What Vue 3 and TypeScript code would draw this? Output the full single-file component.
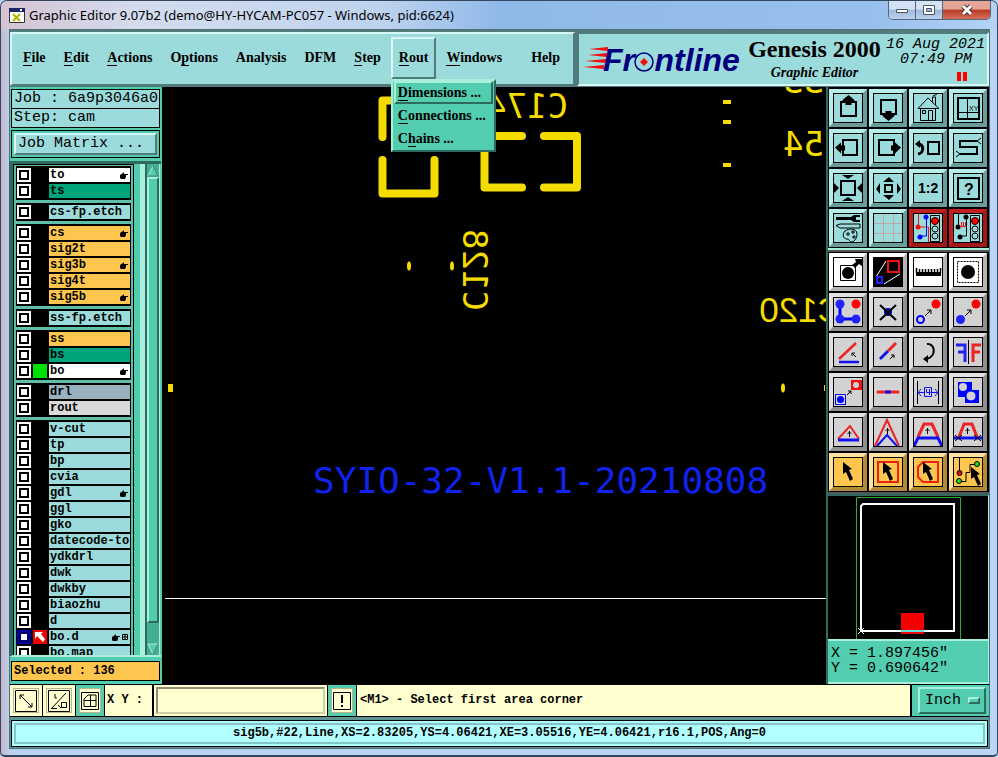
<script setup lang="ts">
import { ref } from 'vue'

interface MenuEntry { before: string; key: string; after: string; open?: boolean; last?: boolean }
interface Layer { name: string; tone?: string; hand?: boolean; mark?: 'green' | 'arrow'; grid?: boolean }
interface Tool { label: string; art: string; tone?: string }

const menus: MenuEntry[] = [
  { before: '', key: 'F', after: 'ile' },
  { before: '', key: 'E', after: 'dit' },
  { before: '', key: 'A', after: 'ctions' },
  { before: 'O', key: 'p', after: 'tions' },
  { before: 'Analysis', key: '', after: '' },
  { before: 'DFM', key: '', after: '' },
  { before: '', key: 'S', after: 'tep' },
  { before: '', key: 'R', after: 'out', open: true },
  { before: '', key: 'W', after: 'indows' },
  { before: 'Help', key: '', after: '', last: true },
]
const routItems: MenuEntry[] = [
  { before: '', key: 'D', after: 'imensions ...' },
  { before: '', key: 'C', after: 'onnections ...' },
  { before: 'C', key: 'h', after: 'ains ...' },
]

const layerGroups: Layer[][] = [
  [{ name: 'to', tone: 'white', hand: true }, { name: 'ts', tone: 'green' }],
  [{ name: 'cs-fp.etch' }],
  [
    { name: 'cs', tone: 'orange', hand: true },
    { name: 'sig2t', tone: 'orange' },
    { name: 'sig3b', tone: 'orange', hand: true },
    { name: 'sig4t', tone: 'orange' },
    { name: 'sig5b', tone: 'orange', hand: true },
  ],
  [{ name: 'ss-fp.etch' }],
  [
    { name: 'ss', tone: 'orange' },
    { name: 'bs', tone: 'green' },
    { name: 'bo', tone: 'white', hand: true, mark: 'green' },
  ],
  [{ name: 'drl', tone: 'slate' }, { name: 'rout', tone: 'gray' }],
  [
    { name: 'v-cut' }, { name: 'tp' }, { name: 'bp' }, { name: 'cvia' },
    { name: 'gdl', hand: true }, { name: 'ggl' }, { name: 'gko' },
    { name: 'datecode-to' }, { name: 'ydkdrl' }, { name: 'dwk' },
    { name: 'dwkby' }, { name: 'biaozhu' }, { name: 'd' },
    { name: 'bo.d', hand: true, grid: true, mark: 'arrow' }, { name: 'bo.map' },
  ],
]

const cursor = '<path d="M10 5l9 7-3 1 4 9-3 2-4-9-3 2z"/>'
const upArrow = (x: number, y: number) =>
  `<path d="M${x}.5 ${y + 6}v-6M${x - 2}.5 ${y + 3}l2-2 2 2" fill="none" stroke="#000"/>`
const slantArrow = (x: number, y: number) =>
  `<path d="M${x} ${y}l6-6m-4 0h4v4" fill="none" stroke="#000"/>`

const viewTools: Tool[] = [
  { label: 'Pan up', art: '<path d="M8 9h15v14h-15z" fill="none" stroke="#000" stroke-width="2"/><path d="M15.500 2l6 5v2h-3v3h-6v-3h-3v-2z"/>' },
  { label: 'Pan down', art: '<path d="M8 7h15v14h-15z" fill="none" stroke="#000" stroke-width="2"/><path d="M15.500 28l6-5v-2h-3v-3h-6v3h-3v2z"/>' },
  { label: 'Home', art: '<path d="M5 15.500l10-10.500 11 10.500H5M7.500 16v11.500h15v-11.500M19.500 9v-5h3v8M9.500 17.500h3v3h-3zM15.500 27v-9.500h4v9.500M20 3l4-2" fill="none" stroke="#000"/>' },
  { label: 'Axes window', art: '<path d="M5 5h21v21h-21z" fill="none" stroke="#000" stroke-width="2"/><path d="M14.500 5v21M5 19.500h21" fill="none" stroke="#000"/><text x="16" y="18" font-size="7">XY</text>' },
  { label: 'Pan left', art: '<path d="M10 7h14v15h-14z" fill="none" stroke="#000" stroke-width="2"/><path d="M2 14.500l6-5v3h4v5h-4v3z"/>' },
  { label: 'Pan right', art: '<path d="M6 7h15v15h-15z" fill="none" stroke="#000" stroke-width="2"/><path d="M28 14.500l-6-5v3h-4v5h4v3z"/>' },
  { label: 'Previous view', art: '<path d="M15 9h11v12h-11z" fill="none" stroke="#000" stroke-width="2"/><path d="M4 11c7-1 8 9 1 10" fill="none" stroke="#000" stroke-width="3"/><path d="M2 11l5-4v8z"/>' },
  { label: 'Serpentine', art: '<path d="M24 8h-17v6h17v7h-17" fill="none" stroke="#000" stroke-width="2"/><path d="M24 8l4-3m-4 3l4 3M7 21l-4-3m4 3l-4 3" fill="none" stroke="#000"/>' },
  { label: 'Zoom in', art: '<path d="M8 8h14v14h-14z" fill="none" stroke="#000" stroke-width="2"/><path d="M9 2h12l-6 4zM9 28h12l-6-4zM1 10l5 5-5 5zM29 10l-5 5 5 5z"/>' },
  { label: 'Zoom out', art: '<path d="M12 12h7v7h-7z" fill="none" stroke="#000" stroke-width="2"/><path d="M10 9h11l-5-5zM10 22h11l-5 5zM7 10v11l-4-5zM24 10v11l4-5z"/>' },
  { label: 'Actual size', art: '<text x="5" y="20" font-size="14" font-weight="700">1:2</text>' },
  { label: 'Query', art: '<path d="M5 5h21v21h-21z" fill="none" stroke="#000" stroke-width="2"/><text x="11" y="22" font-size="16" font-weight="700">?</text>' },
  { label: 'Setup', art: '<path d="M3 4h15l3-2h6v2h-4v3h4v2h-6l-3-2h-15z"/><path d="M3 12.500l4-1.500h20v4h-20zM12 18c4-3 12-3 12 3 0 5-3 8-6 8-2 0-1-3-4-3-4 0-5-5-2-8zM14 20h2v2h-2zM19 18h2v2h-2zM20 23h2v2h-2z" fill="none" stroke="#000"/>' },
  { label: 'Grid', art: '<path d="M10.500 1v28M20.500 1v28M1 10.500h28M1 20.500h28" stroke="#c4a5a5" fill="none"/>' },
  { label: 'Net check', tone: 'alert', art: '<path d="M5.500 1v13h10v15" fill="none" stroke="#e11"/><path d="M13.500 4v19h-7" fill="none" stroke="#00f"/><circle cx="13" cy="4" r="2.500" fill="#00f"/><circle cx="5" cy="14" r="2.500" fill="#e11"/><circle cx="7" cy="24" r="2.500" fill="#00f"/><path d="M17.500 2.500h9v26h-9z" fill="#9cdbdb" stroke="#000"/><circle cx="22" cy="8" r="3.500" fill="#f00" stroke="#000"/><circle cx="22" cy="16" r="3" fill="none" stroke="#000"/><circle cx="22" cy="23" r="3" fill="none" stroke="#000"/>' },
  { label: 'Spacing check', tone: 'alert', art: '<path d="M5.500 1v13M13.500 4v19h-7" fill="none" stroke="#000"/><circle cx="13" cy="4" r="2.500"/><circle cx="5" cy="14" r="2.500"/><circle cx="7" cy="24" r="2.500"/><path d="M7 13.500h6M8.500 9v4M10.500 9v4M12.500 9v4" stroke="#e11"/><path d="M17.500 2.500h9v26h-9z" fill="#9cdbdb" stroke="#000"/><circle cx="22" cy="8" r="3.500" fill="#f00" stroke="#000"/><circle cx="22" cy="16" r="3" fill="none" stroke="#000"/><circle cx="22" cy="23" r="3" fill="none" stroke="#000"/>' },
]

const editTools: Tool[] = [
  { label: 'Snap', tone: 'white', art: '<path d="M7.500 8.500h15v15h-15z" fill="none" stroke="#000"/><circle cx="15" cy="16" r="6"/><path d="M19 8l4-3-1-3h7v7l-3-2-4 4z"/>' },
  { label: 'Area select', tone: 'white', art: '<path d="M0 0h30v30H0z"/><path d="M13 4L3 20M27 17L11 27" stroke="#fff" fill="none"/><path d="M15 4h11v11h-11z" fill="none" stroke="#e11" stroke-width="2"/><path d="M4 20h5v6h-5z" fill="none" stroke="#22f" stroke-width="2"/>' },
  { label: 'Measure', tone: 'white', art: '<path d="M3 15h25v4H3z"/><path d="M3.500 11v5M6.500 12v4M9.500 12v4M12.500 12v4M15.500 12v4M18.500 12v4M21.500 12v4M24.500 12v4M27.500 11v5" stroke="#000" stroke-width="1.500"/>' },
  { label: 'Feature select', tone: 'white', art: '<path d="M4.500 4.500h21v21h-21z" fill="none" stroke="#000" stroke-dasharray="2 1"/><circle cx="15" cy="15" r="7"/>' },
  { label: 'Chain select', art: '<path d="M7 7v15h16" fill="none" stroke="#00f" stroke-width="3"/><g fill="#22f"><circle cx="7" cy="7" r="4.500"/><circle cx="7" cy="22" r="4.500"/><circle cx="23" cy="22" r="4.500"/></g><circle cx="23" cy="7" r="4.500" fill="#f00"/>' },
  { label: 'Delete', art: '<circle cx="15" cy="15" r="4" fill="#00b"/><path d="M7 8l16 15M23 8L7 23" stroke="#000" stroke-width="2"/>' },
  { label: 'Copy', art: '<circle cx="23" cy="7" r="4.500" fill="#f00"/><circle cx="7.500" cy="22.500" r="3.500" fill="none" stroke="#00f" stroke-width="2"/>' + slantArrow(12, 19) },
  { label: 'Move', art: '<circle cx="23" cy="7" r="4.500" fill="#f00"/><circle cx="7.500" cy="22.500" r="4.500" fill="#22f"/>' + slantArrow(12, 19) },
  { label: 'Rotate line', art: '<path d="M6 22L23 6" stroke="#e22" stroke-width="2.500"/><path d="M6 25h20" stroke="#11e" stroke-width="2.500"/><path d="M23 20l-4-4m0 3v-3h3" fill="none" stroke="#000"/>' },
  { label: 'Extend line', art: '<path d="M7 22l8-8" stroke="#11e" stroke-width="3"/><path d="M15 14l8-8" stroke="#e22" stroke-width="3"/><path d="M17 22l4-4m-3 0h3v3" fill="none" stroke="#000"/>' },
  { label: 'Rotate', art: '<path d="M14 7c8-1 10 12 0 15" fill="none" stroke="#000" stroke-width="2"/><path d="M10 22l5-4v8z"/>' },
  { label: 'Mirror', art: '<path d="M15.500 3v24" stroke="#000"/><path d="M12 25V8H3M12 15H5" fill="none" stroke="#22e" stroke-width="3"/><path d="M20 25V8h8M20 15h7" fill="none" stroke="#e22" stroke-width="3"/>' },
  { label: 'Resize pad', art: '<path d="M18 3h11v10H18z" fill="#e11"/><circle cx="23" cy="8" r="3" fill="#d2d2d2"/><path d="M2.500 17.500h10v10h-10z" fill="none" stroke="#00f"/><circle cx="7.500" cy="22.500" r="3.500" fill="#00f"/><path d="M14 18l4-4m-3 0h3v3" fill="none" stroke="#000"/>' },
  { label: 'Break line', art: '<path d="M5 15h20" stroke="#e22" stroke-width="3" stroke-linecap="round"/><path d="M12 15h6" stroke="#11e" stroke-width="3"/>' },
  { label: 'Set spacing', art: '<path d="M4.500 4v23M25.500 4v23" stroke="#000"/><path d="M5 15.500h6m8 0h6M8 12l-3 3.500 3 3.500M22 12l3 3.500-3 3.500M11.500 10.500h7v9h-7zM16.500 18v-6M13.500 12v3.500h4" fill="none" stroke="#11e"/>' },
  { label: 'Merge surfaces', art: '<path d="M5 5h14v15H5zM12 13h14v13H12z" fill="#00f"/><circle cx="10" cy="10" r="4" fill="#d2d2d2"/><circle cx="18" cy="19" r="5" fill="#d2d2d2" stroke="#00f"/>' },
  { label: 'Stretch slope', art: '<path d="M5 22L17 9l9 13" fill="none" stroke="#e22" stroke-width="2"/><path d="M5 23h21" stroke="#11e" stroke-width="3"/>' + upArrow(16, 14) },
  { label: 'Stretch corner', art: '<path d="M2 29L14 3l12 26" fill="none" stroke="#e22" stroke-width="2"/><path d="M4 29l10-11 10 11" fill="none" stroke="#11e" stroke-width="2"/>' + upArrow(14, 11) },
  { label: 'Stretch parallel', art: '<path d="M5 20l6-13h8l6 13" fill="none" stroke="#e22" stroke-width="3"/><path d="M1 29l4-8h20l4 8" fill="none" stroke="#11e" stroke-width="3"/>' + upArrow(14, 11) },
  { label: 'Stretch segment', art: '<path d="M6 20l5-13h8l5 13" fill="none" stroke="#e22" stroke-width="3"/><path d="M1 21h28" stroke="#11e" stroke-width="3"/><path d="M2 18l7 6m0-6l-7 6M21 18l7 6m0-6l-7 6" stroke="#000"/>' + upArrow(14, 11) },
  { label: 'Pick', tone: 'orange', art: cursor },
  { label: 'Pick in rectangle', tone: 'orange', art: '<path d="M5 5h20v20H5z" fill="none" stroke="#e21" stroke-width="2"/>' + cursor },
  { label: 'Pick in polygon', tone: 'orange', art: '<path d="M10 5h15v20H10l-5-5V10z" fill="none" stroke="#e21" stroke-width="2"/>' + cursor },
  { label: 'Pick net', tone: 'orange', art: '<path d="M6.500 1v15M6 24.500h7v-9h4v-8h7" fill="none" stroke="#000"/><circle cx="6.500" cy="16" r="2.500" fill="#d11" stroke="#000"/><circle cx="6" cy="24" r="2.500" fill="#2d2" stroke="#000"/><circle cx="24" cy="7" r="2.500" fill="#2d2" stroke="#000"/><g transform="translate(8 5)">' + cursor + '</g>' },
]

const xy = ref('')
const unit = ref('Inch')
</script>

<template>
  <div class="window">
    <header class="titlebar">
      <svg class="app-icon" width="16" height="15" viewBox="0 0 16 15" aria-hidden="true">
        <path d="M.5 .5h15v14H.5z" fill="#fff" stroke="#333" />
        <path d="M0 0h16v4H0z" fill="#1b2563" />
        <path d="M11 1h2v2h-2z" fill="#fff" />
        <path d="M4 6l7 7M11 6l-7 7" stroke="#b3b300" stroke-width="2" />
      </svg>
      <h1>Graphic Editor 9.07b2 (demo@HY-HYCAM-PC057 - Windows, pid:6624)</h1>
      <div class="caption-buttons">
        <button type="button" aria-label="Minimize">
          <svg width="14" height="12"><path d="M1.500 5.500h11v3h-11z" fill="#fff" stroke="#4a5568" /></svg>
        </button>
        <button type="button" aria-label="Maximize">
          <svg width="14" height="12"><path d="M1.500 1.500h11v9h-11z" fill="#fff" stroke="#4a5568" /><path d="M4.500 4.500h5v3h-5z" fill="#9cb9dd" stroke="#4a5568" /></svg>
        </button>
        <button type="button" class="close" aria-label="Close">
          <svg width="14" height="12"><path d="M3 2l8 8M11 2l-8 8" stroke="#4a3030" stroke-width="5" /><path d="M3 2l8 8M11 2l-8 8" stroke="#fff" stroke-width="3" /></svg>
        </button>
      </div>
    </header>

    <div class="client">
      <div class="top">
        <nav class="menubar">
          <div v-for="m in menus" :key="m.before + m.key + m.after" class="menu" :class="{ last: m.last }">
            <button type="button" class="menu-button" :class="{ open: m.open }">{{ m.before }}<u v-if="m.key">{{ m.key }}</u>{{ m.after }}</button>
            <div v-if="m.open" class="dropdown">
              <button v-for="(r, i) in routItems" :key="i" type="button" :class="{ raised: i === 0 }">{{ r.before }}<u>{{ r.key }}</u>{{ r.after }}</button>
            </div>
          </div>
        </nav>
        <section class="brand">
          <svg class="logo" width="160" height="40" viewBox="0 0 160 40">
            <path d="M6 10l19-2v4zM5 16l19-2v4zM2 22l21-2v4zM0 28l21-2v4z" fill="#f01010" />
            <text x="20" y="32" class="logo-text">Fr<tspan fill="none">o</tspan>ntline</text>
            <circle cx="61" cy="23" r="9" fill="none" stroke="#00007f" stroke-width="1.500" />
            <path d="M61 19l4 4-4 4-4-4z" fill="#f01010" />
          </svg>
          <div class="product">
            <strong>Genesis 2000</strong>
            <em>Graphic Editor</em>
          </div>
          <div class="clock">
            <span>16 Aug 2021</span>
            <span class="time">07:49 PM</span>
            <i class="pause"></i>
          </div>
        </section>
      </div>

      <main class="workspace">
        <aside class="left">
          <div class="field">Job : 6a9p3046a0</div>
          <div class="field step">Step: cam</div>
          <div class="matrix"><button type="button">Job Matrix ...</button></div>
          <div class="layers">
            <div class="layer-list">
              <div v-for="(g, gi) in layerGroups" :key="gi" class="group">
                <label v-for="l in g" :key="l.name" class="layer" :class="l.tone">
                  <input type="checkbox" :class="{ current: l.mark === 'arrow' }" />
                  <span class="mark" :class="l.mark">
                    <svg v-if="l.mark === 'arrow'" width="14" height="14" viewBox="0 0 14 14"><path d="M2 2h8L8 4l4 5-2 3-6-6-2 3z" fill="#fff" /></svg>
                  </span>
                  <span class="name">{{ l.name }}
                    <span class="flags">
                      <svg v-if="l.hand" width="8" height="7" viewBox="0 0 8 7"><path d="M0 3l3-2 1-1v2h4v1H6v2L5 7H1L0 6z" /></svg>
                      <svg v-if="l.grid" width="6" height="6" viewBox="0 0 6 6"><path d="M.5 .5h5v5h-5zM3 0v6M0 3h6" fill="none" stroke="#000" /></svg>
                    </span>
                  </span>
                </label>
              </div>
            </div>
            <div class="scrollbar">
              <button type="button" aria-label="Scroll up"><svg width="12" height="12"><path d="M6 1l5 10H1z" fill="#52cdb0" stroke="#a8efdc" /><path d="M6 1l5 10H1" fill="none" stroke="#2d6b5e" /></svg></button>
              <div class="trough"><div class="thumb"></div></div>
              <button type="button" aria-label="Scroll down"><svg width="12" height="12"><path d="M1 1h10L6 11z" fill="#52cdb0" stroke="#a8efdc" /><path d="M11 1L6 11" stroke="#2d6b5e" /></svg></button>
            </div>
          </div>
          <output class="selected">Selected : 136</output>
        </aside>

        <section class="canvas" aria-label="Board">
          <svg width="100%" height="100%">
            <g transform="translate(-163 -87)">
              <g fill="none" stroke="#f5dc00" stroke-width="8" stroke-linejoin="round" stroke-linecap="round">
                <path d="M382.500 137V100.500H434.500V137M382.500 160V193.500H434.500V160" />
                <path d="M522 136H484.500V187.500H522M544 136H577V187.500H544" />
              </g>
              <g fill="#f5dc00">
                <path d="M723 100h8v4h-8zM723 120h8v4h-8zM723 163h8v4h-8z" />
                <ellipse cx="409" cy="266" rx="2" ry="4.500" />
                <ellipse cx="452" cy="266" rx="2" ry="4.500" />
                <path d="M168 384h5v8h-5z" />
                <ellipse cx="783" cy="388" rx="2" ry="4.500" />
                <path d="M824 385h1v6h-1z" />
                <g class="silk">
                  <text transform="translate(568 118) scale(-1 1)">C174</text>
                  <text transform="translate(824 93) scale(-1 1)">33</text>
                  <text transform="translate(824 156) scale(-1 1)">54</text>
                  <text transform="matrix(0 -1 -1 0 463 311)">C128</text>
                  <text class="plain" transform="translate(843 322) scale(-1 1)">C120</text>
                </g>
              </g>
              <text x="313" y="493" class="board-name">SYIO-32-V1.1-20210808</text>
            </g>
            <path d="M2 511.500H5000" stroke="#fff" />
          </svg>
        </section>

        <aside class="right">
          <div class="tools view">
            <button v-for="t in viewTools" :key="t.label" type="button" :aria-label="t.label" :class="t.tone">
              <svg width="30" height="30" viewBox="0 0 30 30" v-html="t.art"></svg>
            </button>
          </div>
          <div class="tools edit">
            <button v-for="t in editTools" :key="t.label" type="button" :aria-label="t.label" :class="t.tone">
              <svg width="30" height="30" viewBox="0 0 30 30" v-html="t.art"></svg>
            </button>
          </div>
          <div class="overview">
            <svg width="160" height="145" viewBox="0 0 160 145">
              <path d="M28.500 145V1.500H132.500V145" fill="none" stroke="#2fae2f" />
              <path d="M33 135V10l2-2h91v127z" fill="none" stroke="#fff" stroke-width="2" />
              <path d="M73 117h23v21H73z" fill="#f40000" />
              <path d="M73 135h23" stroke="#60e0e0" stroke-width="2" />
              <path d="M30 132l6 6m0-6l-6 6" stroke="#fff" />
            </svg>
          </div>
          <div class="coords">
            <div>X = 1.897456"</div>
            <div>Y = 0.690642"</div>
          </div>
        </aside>
      </main>

      <div class="command">
        <button type="button" class="mode" aria-label="Diagonal">
          <svg width="22" height="22"><path d="M.5 .5h21v21H.5zM5 5l12 12M5 9V5h4M17 13v4h-4" fill="none" stroke="#000" /></svg>
        </button>
        <button type="button" class="mode" aria-label="Angle">
          <svg width="22" height="22"><path d="M.5 .5h21v21H.5zM3 19L18 3M4 18.500h5M7 4v4h2M10 15l3 3M13.500 12.500h5v5h-5z" fill="none" stroke="#000" /></svg>
        </button>
        <button type="button" class="mode framed" aria-label="Window grid">
          <svg width="18" height="18"><path d="M.5 .5h17v17H.5zM3 14.500V7l4-4h8v11.500zM3 8.500h12M9.500 3v12" fill="none" stroke="#000" /></svg>
        </button>
        <label for="xy" class="xy-label">X Y :</label>
        <div class="xy-box"><input id="xy" v-model="xy" type="text" /></div>
        <button type="button" class="mode framed" aria-label="Alert">
          <svg width="18" height="18"><path d="M.5 .5h17v17H.5z" fill="none" stroke="#000" /><path d="M8 3h2v8H8zM8 13h2v2H8z" /></svg>
        </button>
        <div class="message">&lt;M1&gt; - Select first area corner</div>
        <div class="unit">
          <select v-model="unit" aria-label="Units"><option>Inch</option><option>MM</option></select>
          <i></i>
        </div>
      </div>

      <footer class="status"><div>sig5b,#22,Line,XS=2.83205,YS=4.06421,XE=3.05516,YE=4.06421,r16.1,POS,Ang=0</div></footer>
    </div>
  </div>
</template>

<style>
html, body { margin: 0; background: #b8d4f4; }
</style>

<style scoped>
* { box-sizing: border-box; }
svg { display: block; }
button { font: inherit; color: inherit; cursor: default; }
u { text-decoration: none; border-bottom: 1px solid #000; }

.window {
  --aqua: #9cdbdb; --aqua-hi: #d8f6f6; --aqua-lo: #527b7b;
  --mint: #52cdb0; --mint-hi: #a8efdc; --mint-lo: #2d6b5e;
  --cream: #ffffcf; --mono: "Liberation Mono", monospace;
  height: 100vh;
  display: flex;
  flex-direction: column;
  padding: 0 7px 6px 8px;
  overflow: hidden;
  border: 1px solid #34475c;
  border-width: 1px 1px 2px;
  border-radius: 7px 7px 5px 5px;
  background: linear-gradient(90deg, #c8b9cc 0, #b9d2f2 10px, #b9d6f8 100%);
  color: #000;
}

.titlebar {
  display: flex;
  align-items: center;
  flex: 0 0 28px;
  margin: 0 -7px 0 -8px;
  padding: 0 6px 0 8px;
  background: linear-gradient(90deg, #d5c3d3 0, #d3dcee 14%, #bfd3ee 38%, #8fb9e8 50%, #98c0ec 88%, #b4d3f6 100%);
}
.titlebar h1 { flex: 1; margin: 0 0 0 4px; font: 400 13px/18px "Noto Sans", sans-serif; white-space: nowrap; }
.caption-buttons { display: flex; align-self: flex-start; height: 19px; border: 1px solid #55657c; border-top: 0; border-radius: 0 0 5px 5px; overflow: hidden; }
.caption-buttons button {
  display: flex; align-items: center; justify-content: center;
  width: 27px; padding: 0; border: 0; border-right: 1px solid #55657c;
  background: linear-gradient(#d3e2f5 45%, #9db9da 50%, #b9d2ee);
}
.caption-buttons .close { width: 47px; border-right: 0; background: linear-gradient(#e5a698 45%, #b93a24 50%, #d6705a); }

.client { flex: 1; min-height: 0; display: flex; flex-direction: column; border: 1px solid #4f6f70; background: #000; }

.top { display: flex; flex: 0 0 57px; padding: 2px 0 1px; background: var(--aqua-lo); }
.menubar {
  flex: 0 0 565px; display: flex; align-items: flex-start; gap: 2px; padding: 3px 5px 0 3px;
  border: 2px solid; border-color: var(--aqua-hi) var(--aqua-lo) var(--aqua-lo) var(--aqua-hi);
  background: var(--aqua);
  font: 700 14px/18px "Liberation Serif", serif;
}
.menu { position: relative; }
.menu.last { margin-left: auto; }
.menu-button { display: block; height: 42px; padding: 0 6px; border: 2px solid transparent; background: none; }
.menu-button.open { border-color: var(--aqua-hi) var(--aqua-lo) var(--aqua-lo) var(--aqua-hi); }
.dropdown {
  position: absolute; z-index: 2; top: 42px; left: 0; padding: 0 1px;
  display: flex; flex-direction: column;
  border: 2px solid; border-color: var(--mint-hi) var(--mint-lo) var(--mint-lo) var(--mint-hi);
  background: var(--mint);
}
.dropdown button { height: 23px; padding: 0 5px 0 2px; border: 2px solid transparent; background: none; text-align: left; white-space: nowrap; }
.dropdown .raised { border-color: var(--mint-hi) var(--mint-lo) var(--mint-lo) var(--mint-hi); }

.brand {
  flex: 1; min-width: 0; display: flex; align-items: center; justify-content: space-between;
  margin-left: 2px; padding: 0 2px 0 4px;
  border: 2px solid; border-color: var(--aqua-lo) var(--aqua-hi) var(--aqua-hi) var(--aqua-lo);
  background: var(--aqua);
}
.logo-text { font: italic 700 32px "Liberation Sans", sans-serif; fill: #00007f; }
.product { display: flex; flex-direction: column; align-items: center; white-space: nowrap; }
.product strong { font: 700 24px/28px "Liberation Serif", serif; }
.product em { font: italic 700 14px/20px "Liberation Serif", serif; }
.clock { display: flex; flex-direction: column; align-items: center; font: italic 400 15px/15px var(--mono); white-space: nowrap; }
.clock .time { align-self: flex-end; padding-right: 13px; }
.pause { align-self: flex-end; width: 10px; height: 9px; margin: 5px 18px 0 0; border: solid #f00; border-width: 0 4px; }

.workspace { flex: 1; min-height: 0; display: flex; }

.left {
  flex: 0 0 153px; display: flex; flex-direction: column;
  padding: 2px 1px 3px; background: var(--mint);
  border-right: 1px solid #000;
}
.field {
  flex: none; margin-right: 1px; padding: 0 1px 0 2px; border: 1px solid #000; background: var(--aqua);
  font: 400 15px/18px var(--mono); height: 20px; white-space: nowrap;
}
.step { margin-top: -1px; }
.matrix { flex: none; margin: 2px 1px 3px 0; padding: 2px; border: 1px solid #000; }
.matrix button {
  display: block; width: 100%; height: 22px; padding: 0 2px; text-align: left;
  border: 2px solid; border-color: var(--aqua-hi) var(--aqua-lo) var(--aqua-lo) var(--aqua-hi);
  background: var(--aqua); font: 400 15px/18px var(--mono);
}
.layers {
  flex: 1; min-height: 0; display: flex; justify-content: space-between;
  margin-left: -2px; padding-right: 1px;
  border-top: 3px solid var(--mint-lo); border-bottom: 2px solid var(--mint-hi); border-left: 4px solid var(--mint-lo);
}
.layer-list {
  flex: 0 0 121px; overflow: hidden; display: flex; flex-direction: column; gap: 3px;
  padding: 1px 2px; border: solid #000; border-width: 1px 1px 0;
  background: #5fbfa8;
}
.group { flex: none; padding: 1px; background: #000; }
.layer { display: flex; height: 16px; align-items: center; }
.layer input {
  appearance: none; flex: none; width: 14px; height: 14px; margin: 0;
  background: #fff; border: 2px solid #fff; outline: 2px solid #000; outline-offset: -4px;
}
.layer input.current { border-color: #00a; outline-color: #006; }
.mark { flex: none; width: 14px; height: 14px; margin: 0 2px; }
.mark.green { background: #00e000; }
.mark.arrow { background: #f00000; }
.name {
  flex: 1; min-width: 0; height: 14px; padding-left: 1px; display: flex; justify-content: space-between; align-items: center;
  background: var(--aqua); font: 700 12px/14px var(--mono); white-space: nowrap;
}
.flags { display: flex; align-items: center; gap: 2px; padding-right: 2px; }
.white .name { background: #fff; }
.green .name { background: #00a57c; }
.orange .name { background: #ffc64f; }
.slate .name { background: #9ab2bd; }
.gray .name { background: #dadada; }
.scrollbar {
  flex: 0 0 15px; display: flex; flex-direction: column;
  border-left: 2px solid var(--mint-lo); border-right: 1px solid var(--mint-hi); background: #43ae94;
  box-shadow: -5px 0 0 var(--mint-hi), -7px 0 0 var(--mint);
}
.scrollbar button { flex: none; height: 13px; padding: 0; border: 0; background: none; }
.trough { flex: 1; }
.thumb { height: 96%; border: 2px solid; border-color: var(--mint-hi) var(--mint-lo) var(--mint-lo) var(--mint-hi); background: var(--mint); }
.selected {
  flex: none; display: block; margin: 4px 1px 0 0; padding: 0 2px; border: 1px solid #000; background: #ffc64f;
  font: 700 12px/18px var(--mono);
}

.canvas { flex: 1; min-width: 0; position: relative; background: #000; overflow: hidden; }
.canvas svg { position: absolute; inset: 0; }
.silk { font: 34px "DejaVu Sans Mono", monospace; }
.plain { font: 35px "Liberation Sans", sans-serif; }
.board-name { font: 36px "DejaVu Sans Mono", monospace; fill: #1022ee; }

.right { flex: 0 0 162px; display: flex; flex-direction: column; background: #000; border-left: 2px solid var(--mint-lo); }
.tools { display: grid; grid-template-columns: repeat(4, 38px); gap: 2px; padding: 1px; }
.view { padding-top: 2px; border-bottom: 2px solid var(--mint-hi); }
.edit { border: solid #555; border-width: 2px 0; }
.tools button {
  width: 38px; height: 38px; padding: 0; border: 4px solid; border-color: #e2e2e2 #909090 #909090 #e2e2e2; background: #d2d2d2;
}
.tools svg { outline: 1px solid #000; outline-offset: -1px; font-family: "Liberation Sans", sans-serif; }
.view button { border-color: #b9eded #6b9c9c #6b9c9c #b9eded; background: var(--aqua); }
.view button.alert { border-color: #c02020 #a01818 #a01818 #c02020; }
.edit .white { border-color: #fff #b5b5b5 #b5b5b5 #fff; background: #fff; }
.edit .orange { border-color: #ffe2a0 #b38a38 #b38a38 #ffe2a0; background: #ffc64f; }
.overview { flex: 1; min-height: 0; border-top: 2px solid var(--mint-lo); border-right: 1px solid var(--mint-hi); overflow: hidden; }
.coords {
  flex: 0 0 45px; padding: 5px 3px; background: var(--mint);
  border: solid; border-width: 2px 1px 2px 0; border-color: var(--mint-hi) var(--mint-hi) var(--mint-hi);
  font: 400 15px/15px var(--mono); white-space: nowrap;
}

.command { flex: 0 0 33px; display: flex; gap: 1px; padding: 1px 0; background: #000; }
.mode {
  display: flex; align-items: center; justify-content: center; flex: 0 0 32px; padding: 0;
  border: 3px solid var(--cream); background: var(--cream); outline: 1px solid #b5b58e; outline-offset: -4px;
}
.mode.framed { flex-basis: 28px; border-color: var(--mint); }
.xy-label { flex: 0 0 47px; padding-left: 2px; background: var(--cream); font: 700 12px/30px var(--mono); white-space: nowrap; }
.xy-box { flex: 0 0 173px; display: flex; padding: 2px; margin-left: 1px; background: var(--cream); }
.xy-box input {
  width: 100%; min-width: 0; padding: 0 4px; border: 2px solid; border-color: #8f8f74 #cfcfa6 #cfcfa6 #8f8f74;
  background: var(--cream); font: 700 12px/20px var(--mono);
}
.message { flex: 1; min-width: 0; padding-left: 3px; background: var(--cream); font: 700 12px/30px var(--mono); white-space: nowrap; overflow: hidden; }
.unit { flex: 0 0 77px; position: relative; padding: 2px 3px 2px 6px; margin-left: 1px; background: var(--mint); }
.unit select {
  appearance: none; width: 100%; height: 100%; padding: 0 5px; color: #000;
  border: 2px solid; border-color: var(--mint-hi) var(--mint-lo) var(--mint-lo) var(--mint-hi); border-radius: 0;
  background: var(--mint); font: 400 15px/20px var(--mono);
}
.unit i {
  position: absolute; right: 9px; top: 12px; width: 12px; height: 7px; pointer-events: none;
  border: 2px solid; border-color: var(--mint-hi) var(--mint-lo) var(--mint-lo) var(--mint-hi);
}

.status { flex: none; padding: 3px 1px 1px; background: #5f9494; }
.status div {
  height: 27px; border: 1px solid #000; background: #b2ffff;
  outline: 2px solid #84c6c6; outline-offset: -5px;
  font: 700 12px/25px var(--mono); text-align: center; white-space: nowrap; overflow: hidden;
}
</style>
